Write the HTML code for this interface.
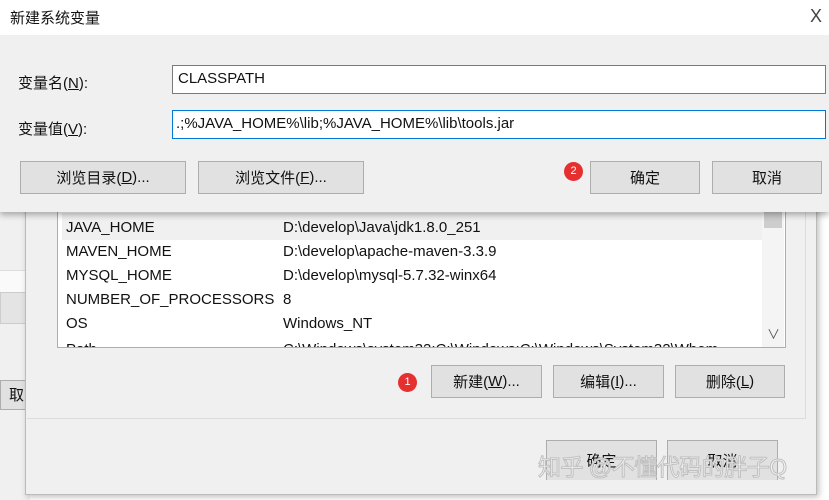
<!DOCTYPE html>
<html><head><meta charset="utf-8"><style>
body{margin:0;width:829px;height:500px;position:relative;overflow:hidden;background:#fff;font-family:"Liberation Sans","Noto Sans CJK SC",sans-serif;font-size:15px;color:#111}
.a{position:absolute}
.btn{position:absolute;background:#e1e1e1;border:1px solid #adadad;box-sizing:border-box;text-align:center;font-size:15px;display:flex;align-items:center;justify-content:center}
.badge{position:absolute;width:19px;height:19px;border-radius:50%;background:#e5302f;color:#fff;font-size:11px;text-align:center;line-height:19px}
.row{position:absolute;left:66px;font-size:15px;height:24px;line-height:24px}
</style></head><body>
<div class="a" style="left:0;top:212px;width:30px;height:288px;background:#f0f0f0"></div>
<div class="a" style="left:0;top:270px;width:26px;height:22px;background:#fafafa;border-top:1px solid #ddd"></div>
<div class="a" style="left:0;top:292px;width:26px;height:30px;background:#e4e4e4;border:1px solid #ccc"></div>
<div class="a" style="left:0;top:380px;width:26px;height:30px;background:#e1e1e1;border:1px solid #adadad;line-height:30px;padding-left:8px;box-sizing:border-box">取</div>
<div class="a" style="left:25px;top:205px;width:790px;height:288px;background:#f0f0f0;border:1px solid #bbb;box-shadow:2px 2px 6px rgba(0,0,0,.25)"></div>
<div class="a" style="left:27px;top:205px;width:778px;height:213px;border-bottom:1px solid #dcdcdc;border-right:1px solid #dcdcdc"></div>
<div class="a" style="left:57px;top:205px;width:727px;height:141px;background:#fff;border:1px solid #adadad;overflow:hidden">
 <div class="a" style="left:4px;top:7px;width:700px;height:27px;background:#f0f0f0"></div>
 <div class="a" style="left:704px;top:0;width:22px;height:141px;background:#f4f4f4"></div>
 <div class="a" style="left:706px;top:6px;width:18px;height:16px;background:#cdcdcd"></div>
 <div class="a" style="left:709px;top:118px;font-size:13px;color:#555">∨</div>
 <div class="a" style="left:8px;top:132px;font-size:15px;line-height:24px">Path</div>
 <div class="a" style="left:225px;top:132px;font-size:15px;line-height:24px;white-space:nowrap">C:\Windows\system32;C:\Windows;C:\Windows\System32\Wbem</div>
</div>
<div class="row" style="top:216px">JAVA_HOME</div><div class="row" style="left:283px;top:216px">D:\develop\Java\jdk1.8.0_251</div>
<div class="row" style="top:240px">MAVEN_HOME</div><div class="row" style="left:283px;top:240px">D:\develop\apache-maven-3.3.9</div>
<div class="row" style="top:264px">MYSQL_HOME</div><div class="row" style="left:283px;top:264px">D:\develop\mysql-5.7.32-winx64</div>
<div class="row" style="top:288px">NUMBER_OF_PROCESSORS</div><div class="row" style="left:283px;top:288px">8</div>
<div class="row" style="top:312px">OS</div><div class="row" style="left:283px;top:312px">Windows_NT</div>
<div class="badge" style="left:398px;top:373px">1</div>
<div class="btn" style="left:431px;top:365px;width:111px;height:33px">新建(<u>W</u>)...</div>
<div class="btn" style="left:553px;top:365px;width:111px;height:33px">编辑(<u>I</u>)...</div>
<div class="btn" style="left:675px;top:365px;width:110px;height:33px">删除(<u>L</u>)</div>
<div class="btn" style="left:546px;top:440px;width:111px;height:40px;border-bottom:none">确定</div>
<div class="btn" style="left:667px;top:440px;width:111px;height:40px;border-bottom:none">取消</div>
<div class="a" style="left:538px;top:448px;font-size:23px;color:#f4f4f4;-webkit-text-stroke:1px #c0c0c0;white-space:nowrap;letter-spacing:-0.5px">知乎 @不懂代码的胖子Q</div>
<div class="a" style="left:0;top:0;width:829px;height:212px;background:#f0f0f0;box-shadow:0 3px 6px rgba(0,0,0,.3)"></div>
<div class="a" style="left:0;top:0;width:829px;height:35px;background:#fff"></div>
<div class="a" style="left:10px;top:7px;font-size:15px">新建系统变量</div>
<div class="a" style="left:810px;top:6px;font-size:18px;color:#444;font-weight:300">X</div>
<div class="a" style="left:18px;top:72px">变量名(<u>N</u>):</div>
<div class="a" style="left:172px;top:65px;width:654px;height:29px;background:#fff;border:1px solid #7a7a7a;box-sizing:border-box;padding:4px 5px">CLASSPATH</div>
<div class="a" style="left:18px;top:118px">变量值(<u>V</u>):</div>
<div class="a" style="left:172px;top:110px;width:654px;height:29px;background:#fff;border:1px solid #0078d7;box-sizing:border-box;padding:4px 3px">.;%JAVA_HOME%\lib;%JAVA_HOME%\lib\tools.jar</div>
<div class="btn" style="left:20px;top:161px;width:166px;height:33px">浏览目录(<u>D</u>)...</div>
<div class="btn" style="left:198px;top:161px;width:166px;height:33px">浏览文件(<u>F</u>)...</div>
<div class="badge" style="left:564px;top:162px">2</div>
<div class="btn" style="left:590px;top:161px;width:110px;height:33px">确定</div>
<div class="btn" style="left:712px;top:161px;width:110px;height:33px">取消</div>
</body></html>
